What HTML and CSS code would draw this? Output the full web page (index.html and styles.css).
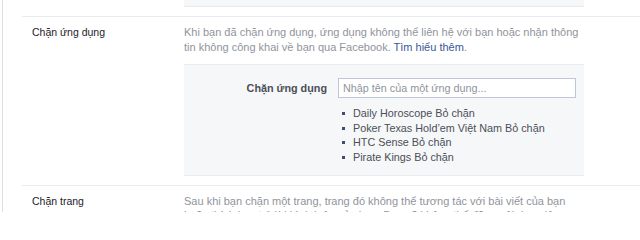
FILE: index.html
```html
<!DOCTYPE html>
<html lang="vi">
<head>
<meta charset="utf-8">
<title>Chặn</title>
<link rel="stylesheet" href="styles.css">
</head>
<body>
<div class="page">
  <div class="section section-first">
    <div class="label"></div>
    <div class="content">
      <div class="panel panel-tail"></div>
    </div>
  </div>
  <div class="section">
    <div class="label">Chặn ứng dụng</div>
    <div class="content">
      <div class="desc">Khi bạn đã chặn ứng dụng, ứng dụng không thể liên hệ với bạn hoặc nhận thông tin không công khai về bạn qua Facebook. <a class="link" href="#">Tìm hiểu thêm</a>.</div>
      <div class="panel panel-form">
        <div class="form-row">
          <label class="form-label" for="app">Chặn ứng dụng</label>
          <div class="form-field">
            <input class="input" id="app" type="text" placeholder="Nhập tên của một ứng dụng...">
            <ul class="list">
              <li>Daily Horoscope Bỏ chặn</li>
              <li>Poker Texas Hold’em Việt Nam Bỏ chặn</li>
              <li>HTC Sense Bỏ chặn</li>
              <li>Pirate Kings Bỏ chặn</li>
            </ul>
          </div>
        </div>
      </div>
    </div>
  </div>
  <div class="section section-last">
    <div class="label">Chặn trang</div>
    <div class="content">
      <div class="desc">Sau khi bạn chặn một trang, trang đó không thể tương tác với bài viết của bạn hoặc thích hay trả lời bình luận của bạn. Bạn sẽ không thể đăng nội dung lên dòng thời gian của trang.</div>
    </div>
  </div>
</div>
</body>
</html>
```
FILE: styles.css
```css
html, body {
  margin: 0;
  padding: 0;
  background: #ffffff;
  height: 212px;
  overflow: hidden;
}
body {
  font-family: "Liberation Sans", Arial, sans-serif;
  font-size: 10.8px;
  line-height: 14.5px;
  color: #1d2129;
}
.page {
  margin-left: 2px;
  border-left: 1px solid #dddfe2;
  height: 212px;
  overflow: hidden;
}
.section {
  display: flex;
  margin-left: 19px;
  padding: 8px 0 9px 10px;
  border-top: 1px solid #e9ebee;
}
.section-first {
  border-top: none;
  padding-top: 0;
}
.section-last {
  padding-bottom: 0;
}
.label {
  width: 152px;
  flex: none;
  color: #1d2129;
  font-size: 10.5px;
}
.content {
  width: 400px;
  flex: none;
}
.desc {
  color: #90949c;
  font-size: 11px;
}
.link {
  color: #365899;
  text-decoration: none;
}
.panel {
  background: #f6f7f9;
}
.panel-tail {
  height: 6px;
  border-bottom: 1px solid #e9ebee;
}
.panel-form {
  margin-top: 10px;
  border-top: 1px solid #e9ebee;
  border-bottom: 1px solid #e9ebee;
  padding: 13px 0 10px;
}
.form-row {
  display: flex;
  align-items: flex-start;
  gap: 11px;
}
.form-label {
  width: 143px;
  flex: none;
  text-align: right;
  font-weight: bold;
  color: #4b4f56;
  line-height: 20px;
}
.form-field {
  width: 238px;
}
.input {
  display: block;
  box-sizing: border-box;
  width: 238px;
  height: 20px;
  margin: 0;
  padding: 0 4px;
  border: 1px solid #bdc7d8;
  background: #ffffff;
  font-family: "Liberation Sans", Arial, sans-serif;
  font-size: 10.8px;
  color: #1d2129;
  outline: none;
}
.input::placeholder {
  color: #90949c;
}
.list {
  list-style: none;
  margin: 8px 0 0;
  padding: 0;
  line-height: 14.67px;
  color: #4b4f56;
}
.list li {
  display: flex;
  align-items: center;
}
.list li::before {
  content: "";
  width: 3px;
  height: 3px;
  flex: none;
  margin: 0 8px 0 4px;
  background: #3f4d6e;
}
```
